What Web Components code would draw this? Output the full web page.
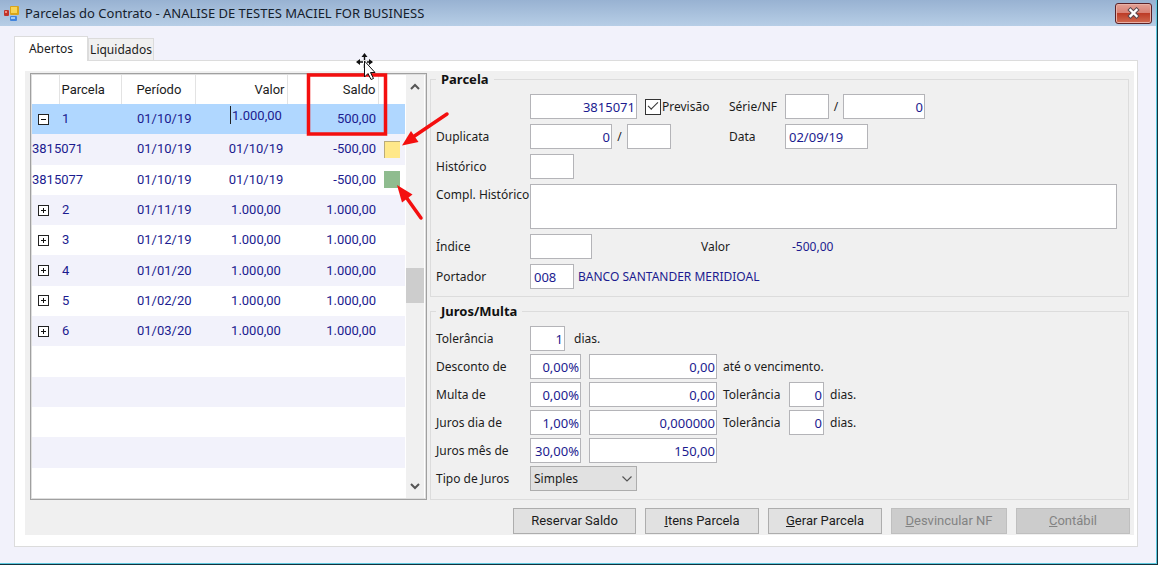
<!DOCTYPE html>
<html lang="pt-BR">
<head>
<meta charset="utf-8">
<title>Parcelas do Contrato</title>
<style>
  html, body { margin: 0; height: 100%; background: #fff; }
  body {
    --ui: "Noto Sans", "Open Sans", sans-serif;
    --grid: Roboto, "Liberation Sans", sans-serif;
    --ink: #1b1b8f;
    --line: #dcdcdc;
    --face: #f0f0f0;
    font: 12px/16px var(--ui);
    color: #1c1c1c;
  }
</style>
</head>
<body>
<app-window heading="Parcelas do Contrato - ANALISE DE TESTES MACIEL FOR BUSINESS">
  <tab-panel tabs="Abertos,Liquidados">
    <contract-view></contract-view>
  </tab-panel>
</app-window>

<script>
const define = (name, render) => customElements.define(name, class extends HTMLElement {
  connectedCallback() {
    if (this.shadowRoot) return;
    this.attachShadow({ mode: 'open' }).innerHTML = render(this);
  }
});
const attr = (el, name, fallback = '') => el.getAttribute(name) ?? fallback;

define('app-window', el => `
<style>
  :host { display: block; box-sizing: border-box; min-height: 100%; height: 100vh; padding-bottom: 2px; }
  .frame { box-sizing: border-box; height: 100%; display: flex; flex-direction: column; background: #f2f2fb;
    border: solid #14323c; border-width: 0 1px 1px 0; }
  .inner { flex: 1; display: flex; flex-direction: column; border: solid #5cc8de; border-width: 0 1px 1px 0; }
  header { height: 26px; display: flex; align-items: center; gap: 6px; padding: 0 4px;
    background: linear-gradient(#98b2d2, #b7cee6); color: #15202c; }
  h1 { margin: 0; flex: 1; font: 13px/20px "Noto Sans", "Open Sans", sans-serif; white-space: nowrap; }
  button { box-sizing: border-box; width: 37px; height: 21px; padding: 0; border: 1px solid #5b2228; border-radius: 3px;
    background: linear-gradient(#e3a196, #d98276 45%, #bd3c27 50%, #d06a50);
    box-shadow: inset 0 0 0 1px #e9b0a6; display: grid; place-items: center; }
  main { flex: 1; display: flex; padding: 10px 18px 16px 14px; }
  ::slotted(*) { flex: 1; }
</style>
<div class="frame"><div class="inner">
  <header>
    <svg width="15" height="15" viewBox="0 0 15 15" aria-hidden="true">
      <rect x="0" y="4" width="5" height="6" rx="1" fill="#c0332b"/><rect x="1" y="5" width="2" height="2" fill="#ef8d80"/>
      <rect x="6" y="0" width="9" height="9" rx="1" fill="#d9a51c"/><rect x="7" y="1" width="6" height="6" fill="#f8d557"/>
      <rect x="6" y="10" width="7" height="5" rx="1" fill="#4384dc"/><rect x="7" y="11" width="4" height="2" fill="#9cc8fa"/>
    </svg>
    <h1>${attr(el, 'heading')}</h1>
    <button type="button" aria-label="Fechar">
      <svg width="15" height="12" viewBox="0 0 15 12"><path d="M4.500 3L10.500 9M10.500 3L4.500 9" stroke="#5a4a50" stroke-width="4.400" stroke-linecap="square"/><path d="M4.500 3L10.500 9M10.500 3L4.500 9" stroke="#fff" stroke-width="2.400" stroke-linecap="square"/></svg>
    </button>
  </header>
  <main><slot></slot></main>
</div></div>`);

define('tab-panel', el => `
<style>
  :host { display: flex; flex-direction: column; min-width: 0; }
  nav { display: flex; align-items: flex-end; height: 24px; }
  button { box-sizing: border-box; height: 22px; padding: 0; margin: 0; width: 66px; text-align: center;
    font: inherit; color: inherit; background: #f0f0f0; border: 1px solid var(--line); border-bottom: 0; }
  button[aria-selected=true] { height: 25px; width: 74px; margin-bottom: -1px; background: #fff; padding-bottom: 1px; z-index: 1; }
  section { flex: 1; display: flex; background: #fff; border: 1px solid var(--line); padding: 10px 3px 11px 10px; }
  ::slotted(*) { flex: 1; min-width: 0; }
</style>
<nav role="tablist">${attr(el, 'tabs').split(',').map((t, i) =>
  `<button type="button" role="tab" aria-selected="${i === 0}">${t}</button>`).join('')}</nav>
<section role="tabpanel"><slot></slot></section>`);

define('group-box', el => `
<style>
  :host { display: block; }
  fieldset { box-sizing: border-box; height: 100%; min-width: 0; margin: 0; padding: 7px 11px 7px 5px; border: 1px solid var(--line); }
  legend { padding: 0 5px; margin-left: 0; font-weight: bold; color: #111; font-size: 13px; line-height: 16px; }
  .rows { display: flex; flex-direction: column; gap: var(--row-gap, 5px); }
</style>
<fieldset><legend>${attr(el, 'heading')}</legend><div class="rows"><slot></slot></div></fieldset>`);

/* A label tied to its input, with an optional text after the input. */
define('text-field', el => {
  const label = attr(el, 'label'), value = attr(el, 'value'), multi = el.hasAttribute('multiline');
  const name = label && label !== '/' ? '' : `aria-label="${attr(el, 'name')}"`;
  return `
<style>
  :host { display: flex; align-items: ${multi ? 'flex-start' : 'center'}; ${multi ? 'flex: 1;' : ''} }
  label { box-sizing: border-box; flex: none; width: ${attr(el, 'label-width', '94')}px; white-space: nowrap;
    ${label === '/' ? 'text-align: center;' : ''} ${multi ? 'padding-top: 3px;' : ''} }
  input, textarea { box-sizing: border-box; height: 25px; margin: 0; padding: 1px 1px 0 3px; font: inherit; font-size: 13px;
    color: var(--ink); background: #fff; border: 1px solid #b4b4b8; border-radius: 0; outline: 0;
    width: ${attr(el, 'box', '44')}px; text-align: ${attr(el, 'align', 'right')}; }
  textarea { flex: 1; min-width: 0; height: 45px; resize: none; display: block; }
  span { margin-left: 6px; white-space: nowrap; }
</style>
<label for="f">${label}</label>${multi ? `<textarea id="f"></textarea>` : `<input id="f" type="text" ${name} value="${value}">`}
${el.hasAttribute('suffix') ? `<span>${attr(el, 'suffix')}</span>` : ''}`;
});

define('check-field', el => `
<style>
  :host { display: flex; align-items: center; }
  input { appearance: none; box-sizing: border-box; width: 16px; height: 16px; margin: 0; border: 1px solid #333; background: #fff;
    display: grid; place-items: center; }
  input:checked::before { content: ""; width: 9px; height: 4px; margin-top: -4px; border: solid #333; border-width: 0 0 1px 1px; transform: rotate(-45deg); }
  label { white-space: nowrap; padding-left: 1px; }
</style>
<input id="c" type="checkbox" checked><label for="c">${attr(el, 'label')}</label>`);

define('select-field', el => `
<style>
  :host { display: flex; align-items: center; }
  label { width: 94px; }
  .box { display: grid; align-items: center; }
  select { grid-area: 1/1; appearance: none; box-sizing: border-box; width: 107px; height: 25px; margin: 0; padding: 0 3px; font: inherit; color: inherit;
    background: #e1e1e1; border: 1px solid #adadad; border-radius: 0; }
  svg { grid-area: 1/1; justify-self: end; margin-right: 4px; pointer-events: none; }
</style>
<label for="s">${attr(el, 'label')}</label>
<div class="box"><select id="s"><option>${attr(el, 'value')}</option></select>
<svg width="12" height="8" viewBox="0 0 12 8"><path d="M1.500 1.500L6 6L10.500 1.500" fill="none" stroke="#555" stroke-width="1.200"/></svg></div>`);

define('push-button', el => `
<style>
  :host { display: block; flex: none; width: ${attr(el, 'box', '114')}px; }
  button { box-sizing: border-box; width: 100%; height: 26px; margin: 0; padding: 0; font: 13px/16px var(--grid); color: #1c1c1c;
    background: #e1e1e1; border: 1px solid #adadad; border-radius: 0; }
  button:disabled { background: #ccc; border-color: #bfbfbf; color: #838383; }
</style>
<button type="button" ${el.hasAttribute('disabled') ? 'disabled' : ''}><slot></slot></button>`);

define('parcel-grid', () => {
  const box = open => `<svg width="11" height="11" viewBox="0 0 11 11" role="img" aria-label="${open ? 'Recolher' : 'Expandir'}"><rect x=".5" y=".5" width="10" height="10" fill="#fff" stroke="#222"/><path d="M3 5.500H8${open ? '' : 'M5.500 3V8'}" stroke="#111"/></svg>`;
  const sub = (n, d, tone) => `<tr><td colspan="2" class="doc">${n}</td><td class="per">${d}</td><td class="val">${d}</td><td class="sal">-500,00</td><td><i class="${tone}"></i></td></tr>`;
  const row = (n, d) => `<tr><td class="exp">${box(false)}</td><td class="num">${n}</td><td class="per">${d}</td><td class="val">1.000,00</td><td class="sal">1.000,00</td><td></td></tr>`;
  const blank = '<tr><td colspan="6"></td></tr>';
  return `
<style>
  :host { box-sizing: border-box; display: flex; gap: 1px; border: 1px solid #a0a0a0; outline: 1px solid #dedede; outline-offset: -2px;
    padding: 1px 2px 1px 1px; background: #fff; font: 13px/16px var(--grid); color: var(--ink); }
  table { flex: 1; height: 100%; table-layout: fixed; border-collapse: collapse; }
  th, td { padding: 0; text-align: left; font-weight: normal; vertical-align: middle; white-space: nowrap; }
  thead tr { height: 29px; }
  tbody tr { height: 30px; }
  th { color: #1c1c1c; border-right: 1px solid #e3e3e3; }
  th:last-child { border: 0; }
  tbody tr:nth-child(even) { background: #f2f2fb; }
  tbody tr.sel { background: #b0d7ff; }
  .exp { padding-left: 6px; line-height: 0; }
  .num { padding-left: 3px; }
  th.num { padding-left: 2px; }
  .per { padding-left: 16px; }
  th.per { padding-left: 15px; }
  th.val, th.sal, .sal { text-align: right; padding-right: 2px; }
  td.val { text-align: center; padding-left: 30px; }
  td input { box-sizing: border-box; display: block; width: 57px; height: 18px; margin: 0 0 8px 5px; padding: 0 0 0 1px;
    border: solid #222; border-width: 0 0 0 1px; background: none; font: inherit; color: inherit; outline: 0; }
  td.edit { padding-left: 30px; }
  i { display: block; box-sizing: border-box; width: 16px; height: 17px; margin-left: 6px; }
  .due { background: #ffe88a; border: solid #b9ab7c; border-width: 1px 0 0 1px; }
  .ok { background: #8fbc8f; }
  .bar { width: 18px; background: #f0f0f0; display: flex; flex-direction: column; align-items: center; }
  .bar svg { flex: none; margin: 8px 0; }
  .before { flex: 170; }
  .thumb { align-self: stretch; height: 35px; background: #cdcdcd; }
  .after { flex: 172; }
</style>
<table>
  <colgroup><col style="width:27px"><col style="width:62px"><col style="width:74px"><col style="width:92px"><col style="width:91px"><col></colgroup>
  <thead><tr><th></th><th class="num">Parcela</th><th class="per">Período</th><th class="val">Valor</th><th class="sal">Saldo</th><th></th></tr></thead>
  <tbody>
    <tr class="sel"><td class="exp">${box(true)}</td><td class="num">1</td><td class="per">01/10/19</td><td class="edit"><input type="text" aria-label="Valor" value="1.000,00"></td><td class="sal">500,00</td><td></td></tr>
    ${sub('3815071', '01/10/19', 'due')}${sub('3815077', '01/10/19', 'ok')}
    ${row(2, '01/11/19')}${row(3, '01/12/19')}${row(4, '01/01/20')}${row(5, '01/02/20')}${row(6, '01/03/20')}
    ${blank.repeat(5)}
  </tbody>
</table>
<div class="bar" aria-hidden="true">
  <svg width="10" height="8" viewBox="0 0 10 8"><path d="M1 6L5 2L9 6" fill="none" stroke="#555" stroke-width="2"/></svg>
  <div class="before"></div><div class="thumb"></div><div class="after"></div>
  <svg width="10" height="8" viewBox="0 0 10 8"><path d="M1 2L5 6L9 2" fill="none" stroke="#555" stroke-width="2"/></svg>
</div>`;
});

/* Red frame, arrows and move pointer lying over the grid. */
define('mark-layer', () => `
<style>
  :host { position: absolute; left: 275px; top: -20px; pointer-events: none; }
  svg { display: block; }
</style>
<svg width="160" height="180" viewBox="300 51 160 180" aria-hidden="true">
  <rect x="308.500" y="75" width="77" height="59" fill="none" stroke="#f40f0f" stroke-width="3.500"/>
  <g stroke="#f40f0f" stroke-width="3.500" stroke-linecap="round"><path d="M447 114L413 137"/><path d="M421 218L406 197"/></g>
  <g fill="#f40f0f"><path d="M402 145.500L411 131L418.500 142Z"/><path d="M397 185L412.500 194.500L402 202.500Z"/></g>
  <g stroke="#111" stroke-width="1.400" fill="none" stroke-dasharray="5 4"><path d="M358 62H372M364.500 55V68"/></g>
  <g fill="#111"><path d="M364.500 53L367.500 57H361.500ZM356 62L360 59V65ZM373 62L369 59V65Z"/></g>
  <path d="M364.500 61V77L368 73.500L371 79.500L373.500 78.500L370.500 72.500H375Z" fill="#fff" stroke="#111"/>
</svg>`);

define('contract-view', () => `
<style>
  :host { position: relative; display: flex; flex-direction: column; gap: 8px; background: var(--face); }
  .main { flex: 1; display: flex; gap: 3px; padding: 0 5px; }
  parcel-grid { flex: none; width: 397px; margin-top: 2px; }
  .side { flex: 1; min-width: 0; display: flex; flex-direction: column; gap: 6px; }
  .rates { flex: 1; --row-gap: 3px; }
  .row { display: flex; align-items: center; min-height: 25px; }
  .first { display: flex; gap: 8px; width: 293px; }
  .tight { gap: 0; }
  .wide { width: 265px; }
  .pair text-field + text-field { margin-left: 8px; }
  .pair text-field:nth-child(3) { margin-left: 6px; }
  .ink { color: var(--ink); }
  output { white-space: nowrap; }
  .amount { width: 91px; }
  .bank { margin-left: 4px; }
  footer { display: flex; justify-content: flex-end; gap: 9px; padding: 0 4px 1px; }
</style>
<div class="main">
  <parcel-grid></parcel-grid>
  <div class="side">
    <group-box heading="Parcela">
      <div class="row"><div class="first"><text-field name="Número" box="107" value="3815071"></text-field><check-field label="Previsão"></check-field></div>
        <text-field label="Série/NF" label-width="56" box="44"></text-field><text-field label="/" name="Número NF" label-width="14" box="82" value="0"></text-field></div>
      <div class="row"><div class="first tight"><text-field label="Duplicata" box="82" value="0"></text-field><text-field label="/" name="Parcela da duplicata" label-width="15" box="44"></text-field></div>
        <text-field label="Data" label-width="56" box="83" align="left" value="02/09/19"></text-field></div>
      <div class="row"><text-field label="Histórico" box="44"></text-field></div>
      <div class="row"><text-field label="Compl. Histórico" multiline></text-field></div>
      <div class="row"><div class="first wide"><text-field label="Índice" box="62"></text-field></div><span class="amount">Valor</span><output class="ink">-500,00</output></div>
      <div class="row"><text-field label="Portador" box="44" align="left" value="008"></text-field><output class="ink bank">BANCO SANTANDER MERIDIOAL</output></div>
    </group-box>
    <group-box class="rates" heading="Juros/Multa">
      <div class="row"><text-field label="Tolerância" box="35" value="1" suffix="&nbsp;dias."></text-field></div>
      <div class="row pair"><text-field label="Desconto de" box="51" value="0,00%"></text-field><text-field name="Valor do desconto" label-width="0" box="128" value="0,00" suffix="até o vencimento."></text-field></div>
      <div class="row pair"><text-field label="Multa de" box="51" value="0,00%"></text-field><text-field name="Valor da multa" label-width="0" box="128" value="0,00"></text-field><text-field label="Tolerância" label-width="66" box="35" value="0" suffix="dias."></text-field></div>
      <div class="row pair"><text-field label="Juros dia de" box="51" value="1,00%"></text-field><text-field name="Valor dos juros por dia" label-width="0" box="128" value="0,000000"></text-field><text-field label="Tolerância" label-width="66" box="35" value="0" suffix="dias."></text-field></div>
      <div class="row pair"><text-field label="Juros mês de" box="51" value="30,00%"></text-field><text-field name="Valor dos juros por mês" label-width="0" box="128" value="150,00"></text-field></div>
      <div class="row"><select-field label="Tipo de Juros" value="Simples"></select-field></div>
    </group-box>
  </div>
</div>
<footer>
  <push-button box="123">Reservar Saldo</push-button>
  <push-button><u>I</u>tens Parcela</push-button>
  <push-button><u>G</u>erar Parcela</push-button>
  <push-button box="116" disabled><u>D</u>esvincular NF</push-button>
  <push-button disabled><u>C</u>ontábil</push-button>
</footer>
<mark-layer></mark-layer>`);
</script>
</body>
</html>
